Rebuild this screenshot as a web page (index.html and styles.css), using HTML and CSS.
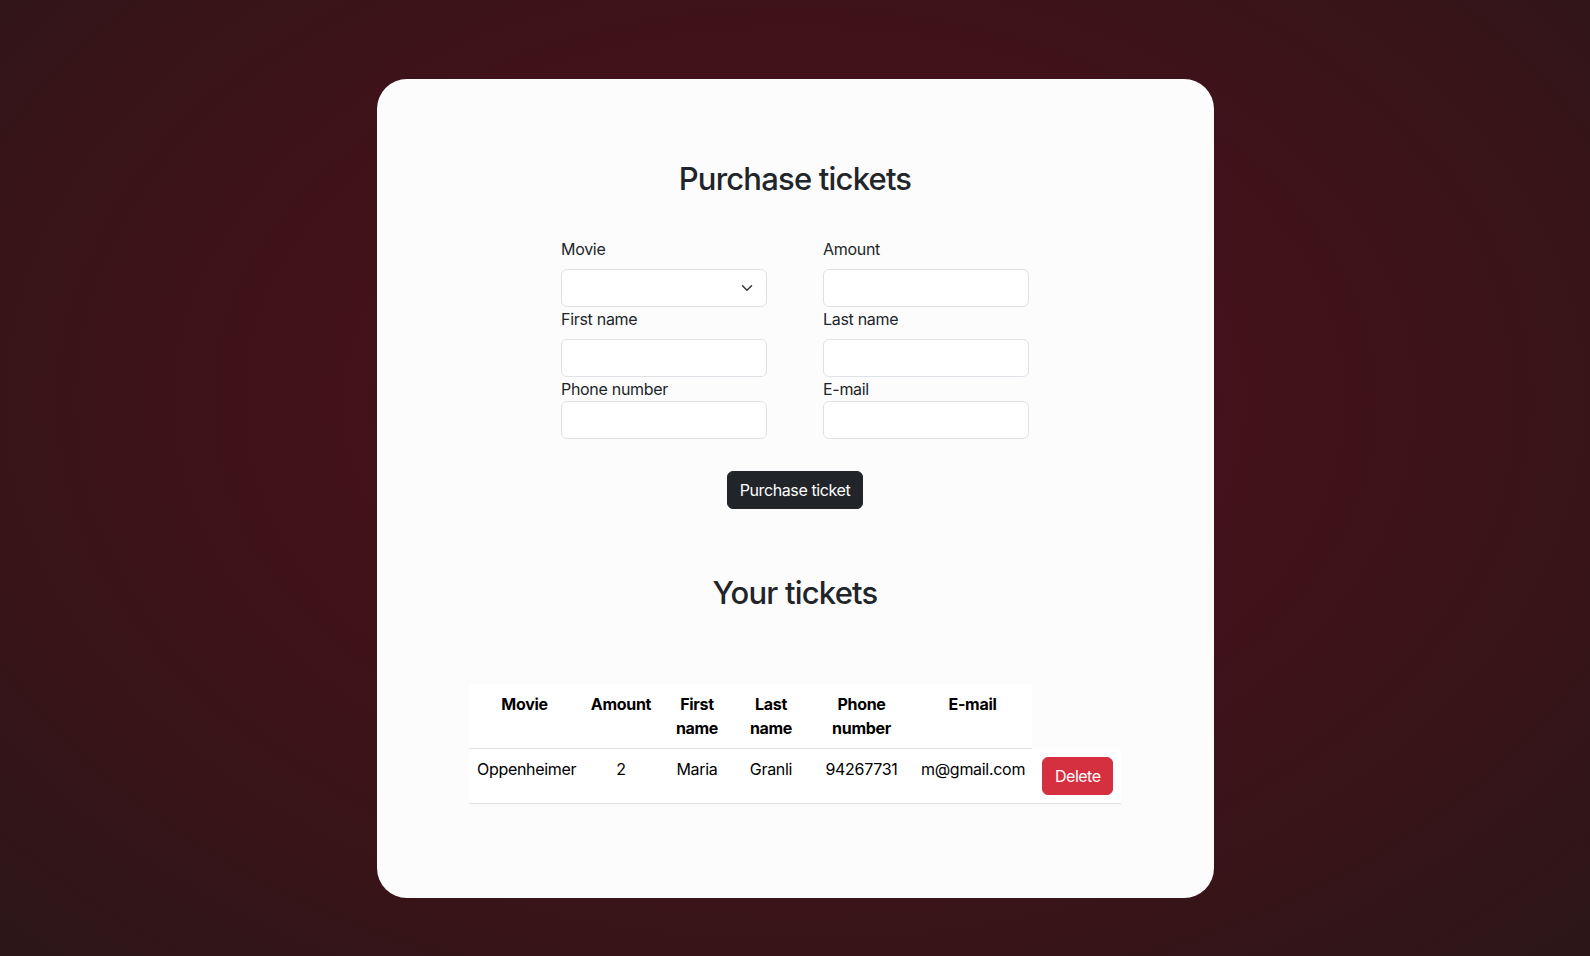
FILE: index.html
```html
<!DOCTYPE html>
<html lang="en">
<head>
<meta charset="utf-8">
<title>Purchase tickets</title>
<link rel="stylesheet" href="styles.css">
</head>
<body>
<main class="card">
  <h2 class="title">Purchase tickets</h2>
  <form class="form">
    <div class="grid">
      <div class="field">
        <label class="lbl" for="movie">Movie</label>
        <div class="select-wrap">
          <select id="movie" class="control select"><option></option></select>
          <svg class="chev" viewBox="0 0 16 16" width="12" height="12"><path d="M2 5l6 6 6-6" fill="none" stroke="#343a40" stroke-width="2" stroke-linecap="round" stroke-linejoin="round"/></svg>
        </div>
      </div>
      <div class="field">
        <label class="lbl" for="amount">Amount</label>
        <input id="amount" class="control" type="text">
      </div>
      <div class="field">
        <label class="lbl" for="first">First name</label>
        <input id="first" class="control" type="text">
      </div>
      <div class="field">
        <label class="lbl" for="last">Last name</label>
        <input id="last" class="control" type="text">
      </div>
      <div class="field">
        <label class="lbl tight" for="phone">Phone number</label>
        <input id="phone" class="control" type="text">
      </div>
      <div class="field">
        <label class="lbl tight" for="email">E-mail</label>
        <input id="email" class="control" type="text">
      </div>
    </div>
    <div class="actions">
      <button type="button" class="btn btn-dark">Purchase ticket</button>
    </div>
  </form>
  <h2 class="title title-2">Your tickets</h2>
  <table class="tickets">
    <colgroup>
      <col class="c1"><col class="c2"><col class="c3"><col class="c4"><col class="c5"><col class="c6"><col class="c7">
    </colgroup>
    <thead>
      <tr>
        <th>Movie</th><th>Amount</th><th>First name</th><th>Last name</th><th>Phone number</th><th>E-mail</th>
      </tr>
    </thead>
    <tbody>
      <tr>
        <td>Oppenheimer</td><td>2</td><td>Maria</td><td>Granli</td><td>94267731</td><td>m@gmail.com</td>
        <td><button type="button" class="btn btn-danger">Delete</button></td>
      </tr>
    </tbody>
  </table>
</main>
</body>
</html>
```
FILE: styles.css
```css
* { box-sizing: border-box; }

html, body { height: 100%; }

body {
  margin: 0;
  font-family: Inter, "Noto Sans", sans-serif;
  font-size: 16px;
  line-height: 24px;
  letter-spacing: -0.3px;
  color: #212529;
  background: radial-gradient(ellipse 75% 85% at 50% 42%, #4c0f15 0%, #43111a 35%, #371418 70%, #2a1719 100%);
  display: flex;
  justify-content: center;
  align-items: flex-start;
}

.card {
  width: 837px;
  margin-top: 79px;
  height: 819px;
  background: #fcfcfc;
  border-radius: 30px;
  padding: 81px 0 0;
}

.title {
  margin: 0 0 40px;
  font-size: 31px;
  line-height: 1.2;
  font-weight: 500;
  text-align: center;
  letter-spacing: -0.8px;
}

.title-2 { margin-bottom: 73px; }

.form {
  width: 468px;
  margin: 0 auto;
}

.grid {
  display: grid;
  grid-template-columns: 206px 206px;
  column-gap: 56px;
}

.field { display: flex; flex-direction: column; }

.lbl {
  display: block;
  margin-bottom: 8px;
  line-height: 24px;
}
.lbl.tight { margin-bottom: 0; }

.control {
  display: block;
  width: 100%;
  height: 38px;
  padding: 6px 12px;
  font: inherit;
  color: #212529;
  background: #fff;
  border: 1px solid #dee2e6;
  border-radius: 6px;
  appearance: none;
  -webkit-appearance: none;
  outline: none;
}

.select-wrap { position: relative; }
.chev {
  position: absolute;
  right: 14px;
  top: 13px;
}

.actions {
  display: flex;
  justify-content: center;
  margin-top: 32px;
  margin-bottom: 65px;
}

.btn {
  font: inherit;
  line-height: 24px;
  padding: 6px 12px;
  border-radius: 6px;
  border: 1px solid transparent;
  color: #fff;
  cursor: pointer;
}
.btn-dark { background: #212529; border-color: #212529; letter-spacing: -0.4px; }
.btn-danger {
  background: #d5303f;
  border-color: #d5303f;
  display: block;
  margin-left: 2px;
  letter-spacing: -0.5px;
}

.tickets {
  width: 652px;
  margin: 0 auto;
  table-layout: fixed;
  border-collapse: collapse;
  color: #000;
}
.c1 { width: 111px; }
.c2 { width: 82px; }
.c3 { width: 70px; }
.c4 { width: 78px; }
.c5 { width: 103px; }
.c6 { width: 119px; }
.c7 { width: 89px; }

.tickets th,
.tickets td {
  padding: 8px;
  text-align: center;
  vertical-align: top;
  background: #fff;
  border-bottom: 1px solid #dee2e6;
}
.tickets th { font-weight: 700; }
.tickets td { white-space: nowrap; }
```
